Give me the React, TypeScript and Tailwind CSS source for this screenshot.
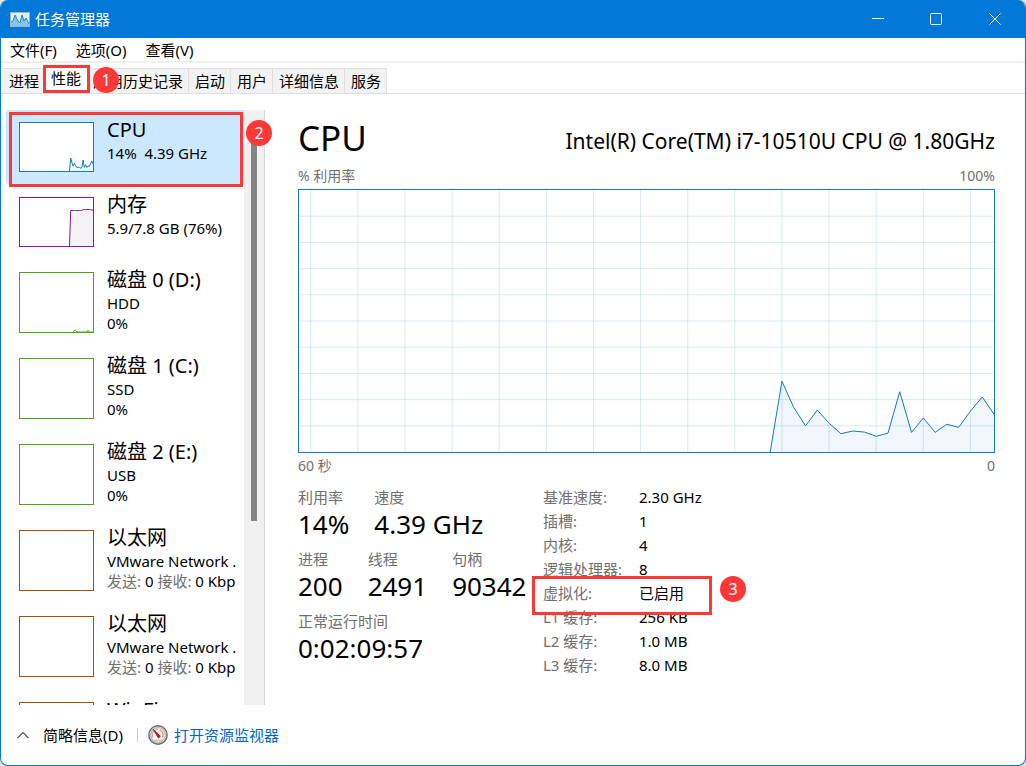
import type { ReactNode } from "react";

type Device = {
    name: string;
    lines: ReactNode[];
    stroke: string;
    fill: string;
    values: number[];
    tall?: boolean;
};

// One sample per second, the newest one last
const SAMPLES = 59;
const CPU_VALUES = [0, 27, 17, 10, 16, 11, 7, 8, 7.6, 6, 7.2, 23, 7.5, 13, 7.5, 10.6, 9.4, 15.6, 21, 14.4];
const MEMORY_VALUES = [0, 74, 74, 74, 74, 74, 74, 74, 74, 74, 74, 76, 76, 76, 76, 76, 76, 76, 75, 75];
const DISK_VALUES = [0, 3, 3, 0, 0, 0, 0, 0, 0, 0, 0, 0, 3, 0, 0, 0, 0];

const vmTraffic = (
    <>
        <span className="text-[#707070]">发送:</span> 0{" "}
        <span className="text-[#707070]">接收:</span> 0 Kbp
    </>
);

const devices: Device[] = [
    { name: "CPU", lines: ["14%  4.39 GHz"], stroke: "#117dbb", fill: "#f1f6fa", values: CPU_VALUES },
    { name: "内存", lines: ["5.9/7.8 GB (76%)"], stroke: "#8b12ae", fill: "#f4f2f4", values: MEMORY_VALUES },
    { name: "磁盘 0 (D:)", lines: ["HDD", "0%"], stroke: "#4da60c", fill: "#eff7e9", values: DISK_VALUES, tall: true },
    { name: "磁盘 1 (C:)", lines: ["SSD", "0%"], stroke: "#4da60c", fill: "#eff7e9", values: [], tall: true },
    { name: "磁盘 2 (E:)", lines: ["USB", "0%"], stroke: "#4da60c", fill: "#eff7e9", values: [], tall: true },
    { name: "以太网", lines: ["VMware Network .", vmTraffic], stroke: "#a74f01", fill: "#fcf3eb", values: [], tall: true },
    { name: "以太网", lines: ["VMware Network .", vmTraffic], stroke: "#a74f01", fill: "#fcf3eb", values: [], tall: true },
    { name: "WinFi", lines: [], stroke: "#a74f01", fill: "#fcf3eb", values: [], tall: true },
];

const tabs = ["进程", "性能", "应用历史记录", "启动", "用户", "详细信息", "服务"];

const statRows = [
    [
        ["利用率", "14%"],
        ["速度", "4.39 GHz"],
    ],
    [
        ["进程", "200"],
        ["线程", "2491"],
        ["句柄", "90342"],
    ],
    [["正常运行时间", "0:02:09:57"]],
];

const details = [
    ["基准速度:", "2.30 GHz"],
    ["插槽:", "1"],
    ["内核:", "4"],
    ["逻辑处理器:", "8"],
    ["虚拟化:", "已启用"],
    ["L1 缓存:", "256 KB"],
    ["L2 缓存:", "1.0 MB"],
    ["L3 缓存:", "8.0 MB"],
];

function Graph({ values, stroke, fill, grid = false }: { values: number[]; stroke: string; fill: string; grid?: boolean }) {
    const start = SAMPLES - values.length + 1;
    const points = values.map((v, i) => `${start + i},${100 - v}`).join(" ");

    return (
        <svg viewBox={`0 0 ${SAMPLES} 100`} preserveAspectRatio="none" className="block h-full w-full" aria-hidden="true">
            {values.length > 0 && <polygon points={`${start},100 ${points} ${SAMPLES},100`} fill={fill} />}
            {grid && (
                <g stroke="#117dbb" strokeOpacity="0.16" shapeRendering="crispEdges">
                    {Array.from({ length: 15 }, (_, i) => (
                        <line key={`v${i}`} x1={1 + i * 4} x2={1 + i * 4} y1="0" y2="100" vectorEffect="non-scaling-stroke" />
                    ))}
                    {Array.from({ length: 9 }, (_, i) => (
                        <line key={`h${i}`} x1="0" x2={SAMPLES} y1={10 + i * 10} y2={10 + i * 10} vectorEffect="non-scaling-stroke" />
                    ))}
                </g>
            )}
            {values.length > 0 && (
                <polyline points={points} fill="none" stroke={stroke} vectorEffect="non-scaling-stroke" />
            )}
        </svg>
    );
}

function Badge({ className, children }: { className: string; children: ReactNode }) {
    return (
        <span
            className={`absolute z-20 flex size-[26px] items-center justify-center rounded-full bg-[#fd3838] text-base text-white ${className}`}>
            {children}
        </span>
    );
}

function Frame({ className }: { className: string }) {
    return <span className={`pointer-events-none absolute z-10 border-3 border-[#fd3838] ${className}`} />;
}

function TitleBar() {
    return (
        <header className="flex h-[38px] shrink-0 items-center bg-[#0078d7] pl-[9px] text-white">
            <svg width="20" height="15" viewBox="0 0 20 15" aria-hidden="true">
                <rect x="0.5" y="0.5" width="19" height="14" fill="#dff0f8" stroke="#a5b3bb" />
                <path d="M1 10 3 9 5 3 8 9 10 11 12 3 14 9 16 6 19 12V14H1Z" fill="#86c5e9" />
                <path d="M1 10 3 9 5 3 8 9 10 11 12 3 14 9 16 6 19 12" fill="none" stroke="#2386bf" />
            </svg>
            <h1 className="ml-[5px] flex-1 text-[15px]">任务管理器</h1>
            <button type="button" aria-label="最小化" className="flex h-full w-[58px] items-center justify-center">
                <svg width="12" height="12" viewBox="0 0 12 12" stroke="currentColor">
                    <path d="M0 5.5H12" />
                </svg>
            </button>
            <button type="button" aria-label="最大化" className="flex h-full w-[58px] items-center justify-center">
                <svg width="12" height="12" viewBox="0 0 12 12" fill="none" stroke="currentColor">
                    <rect x="0.5" y="0.5" width="11" height="11" rx="1" />
                </svg>
            </button>
            <button type="button" aria-label="关闭" className="flex h-full w-[60px] items-center justify-center">
                <svg width="12" height="12" viewBox="0 0 12 12" stroke="currentColor">
                    <path d="M0.5 0.5 11.5 11.5M11.5 0.5 0.5 11.5" />
                </svg>
            </button>
        </header>
    );
}

function Tabs() {
    return (
        <div role="tablist" className="flex h-[31px] shrink-0 items-end border-b border-[#dfdfdf] pl-[2px]">
            {tabs.map((tab) =>
                tab === "性能" ? (
                    <div key={tab} className="relative -ml-0.5 flex h-[29px]">
                        <button type="button" role="tab" aria-selected="true" className="bg-white pr-1.5 pl-2 text-[15px]">
                            {tab}
                        </button>
                        <Frame className="top-px left-0 h-7 w-[47px]" />
                        <Badge className="top-[3px] left-[50px]">1</Badge>
                    </div>
                ) : (
                    <button
                        key={tab}
                        type="button"
                        role="tab"
                        aria-selected="false"
                        className="h-[25px] border-t border-r border-[#dfdfdf] bg-[#f2f2f2] pr-[5px] pl-1.5 text-[15px] leading-6">
                        {tab}
                    </button>
                )
            )}
        </div>
    );
}

function DeviceItem({ device, active }: { device: Device; active: boolean }) {
    return (
        <li className="relative">
            <button
                type="button"
                className={`flex w-full items-start rounded-l-sm pl-[13px] text-left ${active ? "bg-[#cce8ff]" : ""} ${
                    device.tall ? "h-[86px]" : "h-[75px]"
                }`}>
                <span
                    className={`mt-3 w-[75px] shrink-0 border bg-white ${device.tall ? "h-[61px]" : "h-[50px]"}`}
                    style={{ borderColor: device.stroke }}>
                    <Graph values={device.values} stroke={device.stroke} fill={device.fill} />
                </span>
                <span className="ml-[13px] min-w-0 flex-1 overflow-hidden pt-1.5 whitespace-pre">
                    <span className="block text-xl leading-[27px]">{device.name}</span>
                    {device.lines.map((line, i) => (
                        <span key={i} className="block text-[15px] leading-5">
                            {line}
                        </span>
                    ))}
                </span>
            </button>
            {active && <Frame className="top-0.5 left-[3px] right-px h-[75px]" />}
        </li>
    );
}

function Sidebar() {
    return (
        <aside className="relative flex w-[264px] shrink-0 border-r border-[#d9d9d9] pl-[5px]">
            <ul className="min-h-0 flex-1 overflow-hidden">
                {devices.map((device, i) => (
                    <DeviceItem key={i} device={device} active={i === 0} />
                ))}
            </ul>
            <div className="flex w-5 shrink-0 justify-center bg-[#f0f0f0] pt-5">
                <div className="h-[68%] w-1.5 bg-[#858585]" />
            </div>
            <Badge className="top-[10px] -right-2">2</Badge>
        </aside>
    );
}

function CpuPanel() {
    return (
        <section className="flex min-w-0 flex-1 flex-col pr-[30px] pb-7 pl-[33px]">
            <div className="flex h-14 items-center justify-between whitespace-nowrap">
                <h2 className="text-[35px]">CPU</h2>
                <span className="pt-2 text-[21px]">Intel(R) Core(TM) i7-10510U CPU @ 1.80GHz</span>
            </div>
            <div className="flex h-[23px] justify-between text-[14px] leading-5 text-[#707070]">
                <span>% 利用率</span>
                <span>100%</span>
            </div>
            <div className="min-h-40 flex-1 border border-[#117dbb]">
                <Graph values={CPU_VALUES} stroke="#117dbb" fill="#f1f6fa" grid />
            </div>
            <div className="flex h-8 justify-between pt-[3px] text-[14px] leading-5 text-[#707070]">
                <span>60 秒</span>
                <span>0</span>
            </div>
            <div className="flex whitespace-nowrap">
                <div className="w-[245px] shrink-0">
                    {statRows.map((row, i) => (
                        <dl key={i} className="flex h-[62px] gap-[25px]">
                            {row.map(([label, value]) => (
                                <div key={label}>
                                    <dt className="text-[15px] leading-6 text-[#707070]">{label}</dt>
                                    <dd className="text-[26px] leading-[30px]">{value}</dd>
                                </div>
                            ))}
                        </dl>
                    ))}
                </div>
                <dl className="text-[15px] leading-6">
                    {details.map(([label, value]) => (
                        <div key={label} className="relative flex">
                            <dt className="w-24 text-[#707070]">{label}</dt>
                            <dd>{value}</dd>
                            {label === "虚拟化:" && (
                                <>
                                    <Frame className="-top-[5px] -left-[11px] h-[39px] w-[180px]" />
                                    <Badge className="-top-[5px] left-[177px]">3</Badge>
                                </>
                            )}
                        </div>
                    ))}
                </dl>
            </div>
        </section>
    );
}

function Footer() {
    return (
        <footer className="flex h-[60px] shrink-0 items-center pl-4 text-[15px]">
            <button type="button" className="flex items-center">
                <svg width="12" height="8" viewBox="0 0 12 8" fill="none" stroke="#555" strokeWidth="1.2" aria-hidden="true">
                    <path d="M0.5 7 6 1.5 11.5 7" />
                </svg>
                <span className="ml-[14px]">简略信息(D)</span>
            </button>
            <span className="ml-[14px] h-3.5 w-px bg-[#d0d0d0]" />
            <a href="#resmon" className="ml-[10px] flex items-center text-[#0066cc]">
                <svg width="20" height="20" viewBox="0 0 20 20" aria-hidden="true">
                    <circle cx="10" cy="10" r="9.2" fill="#d5d5d5" stroke="#6e6e6e" strokeWidth="1.4" />
                    <circle cx="10" cy="10" r="7.2" fill="#f6f6f4" stroke="#999" strokeWidth="0.7" />
                    <path d="M5 12.5A5.5 5.5 0 0 1 10 4.5" fill="none" stroke="#a0a0a0" />
                    <path d="M12 5A5.5 5.5 0 0 1 14.5 12.5" fill="none" stroke="#ef8b53" strokeWidth="1.3" />
                    <path d="M5.2 4.3 12.3 11.3 10.5 13Z" fill="#c8101b" stroke="#c8101b" />
                    <path d="M6 15.2H14" stroke="#bbb" />
                </svg>
                <span className="ml-1.5">打开资源监视器</span>
            </a>
        </footer>
    );
}

export default function App() {
    return (
        <div className="h-screen bg-[#e4e4e4]">
            <div className="flex h-full flex-col overflow-hidden rounded-lg border border-t-0 border-[#0078d7] bg-white font-['Noto_Sans','Noto_Sans_CJK_SC',sans-serif] text-black">
                <TitleBar />
                <nav className="flex h-[25px] shrink-0 items-center gap-[19px] border-b-2 border-[#f0f0f0] pt-0.5 pl-[9px] text-[15px]">
                    <button type="button">文件(F)</button>
                    <button type="button">选项(O)</button>
                    <button type="button">查看(V)</button>
                </nav>
                <Tabs />
                <main className="flex min-h-0 flex-1 pt-4">
                    <Sidebar />
                    <CpuPanel />
                </main>
                <Footer />
            </div>
        </div>
    );
}
